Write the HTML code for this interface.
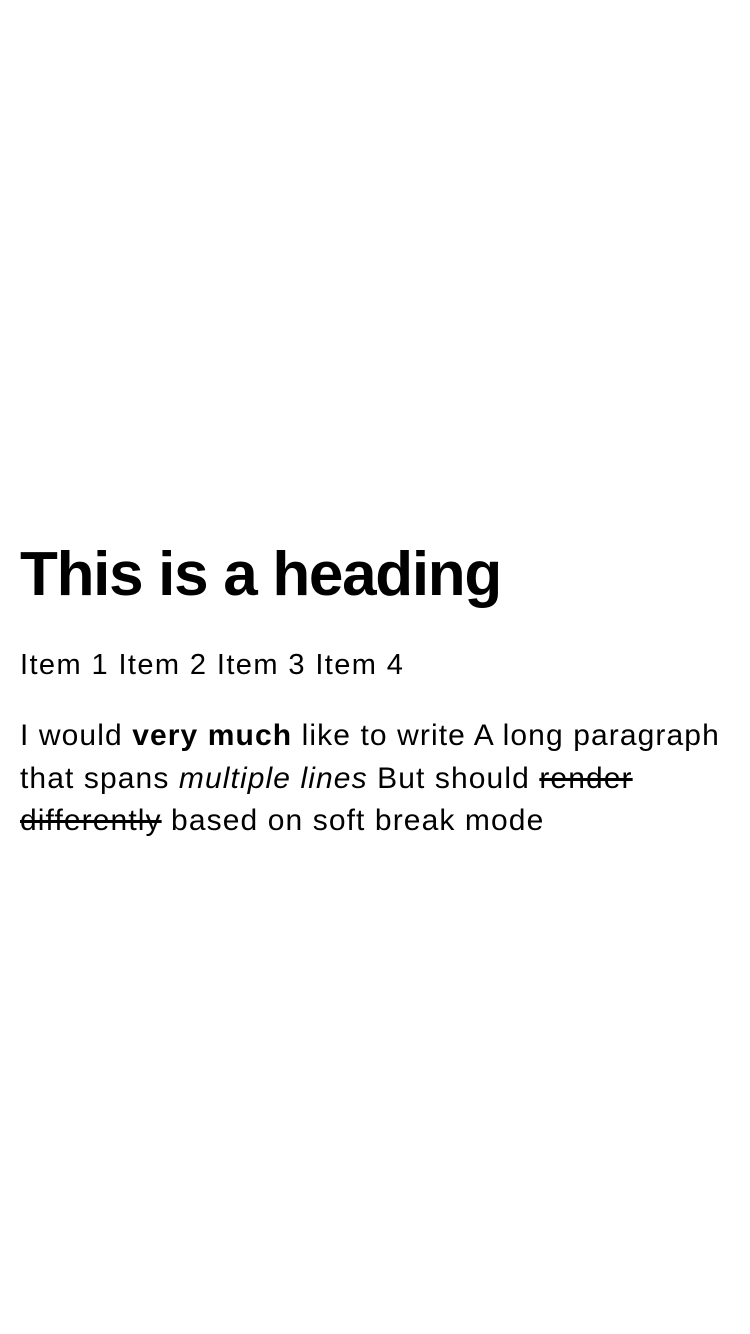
<!DOCTYPE html>
<html><head><meta charset="utf-8"><style>
html,body{margin:0;padding:0;background:#fff;width:750px;height:1334px;overflow:hidden}
body{font-family:"Liberation Sans",sans-serif;color:#000;position:relative}
h1{position:absolute;left:20px;top:537px;margin:0;font-size:62px;font-weight:bold;line-height:76px;letter-spacing:-1.3px;white-space:nowrap}
.items{position:absolute;left:20px;top:646px;font-size:29px;line-height:38px;letter-spacing:1.4px;white-space:nowrap}
p{position:absolute;left:20px;top:715px;margin:0;width:740px;font-size:30px;line-height:42.5px;letter-spacing:1.1px;white-space:nowrap}
s{text-decoration:line-through}
</style></head><body>
<h1>This is a heading</h1>
<div class="items">Item 1 Item 2 Item 3 Item 4</div>
<p>I would <b>very much</b> like to write A long paragraph<br>that spans <i>multiple lines</i> But should <s>render</s><br><s>differently</s> based on soft break mode</p>
</body></html>
